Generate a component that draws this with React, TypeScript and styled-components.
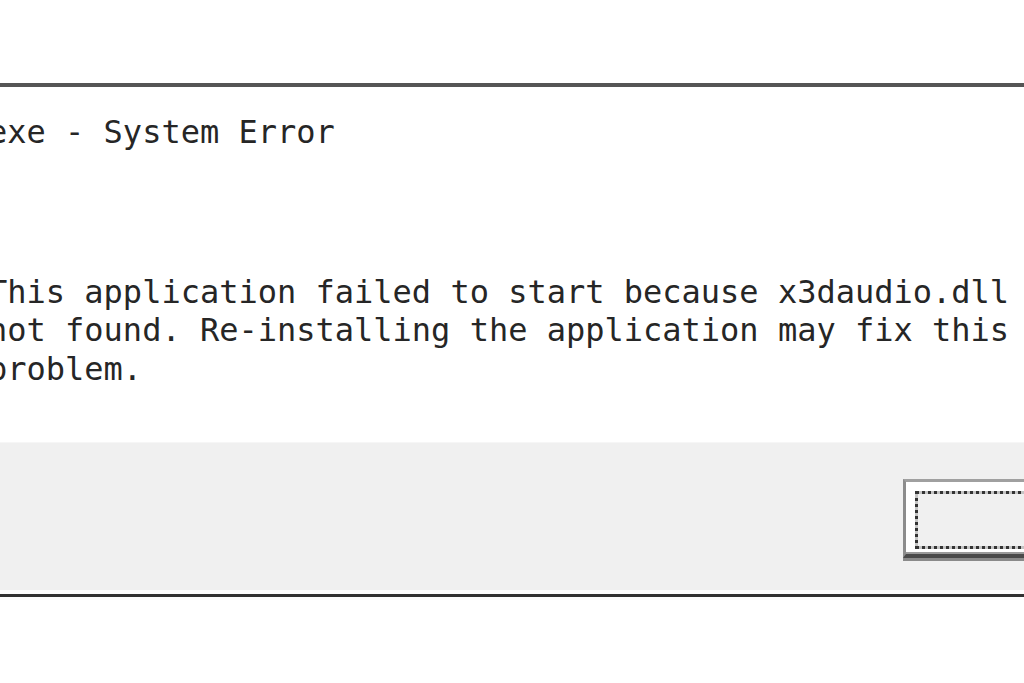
import styled, { createGlobalStyle } from "styled-components";

const GlobalStyle = createGlobalStyle`
  html,
  body {
    margin: 0;
    padding: 0;
    background: #ffffff;
    overflow: hidden;
  }

  body {
    font-family: "DejaVu Sans Mono", "Liberation Mono", monospace;
    color: #262626;
  }
`;

const Dialog = styled.div`
  box-sizing: border-box;
  width: 1273px;
  margin: 83px 0 0 -40px;
  display: flex;
  flex-flow: column;
  background: #ffffff;
  border-top: 4px solid #555555;
  border-bottom: 3px solid #333333;
  box-shadow: 0 3px 0 #6a6a6a;
  padding-bottom: 4px;
`;

const Body = styled.div`
  display: flex;
  flex-flow: column;
  padding: 26px 0 54px 28px;
`;

const Title = styled.div`
  font-size: 32px;
  line-height: 38.5px;
  white-space: pre;
`;

const Message = styled.p`
  margin: 121px 0 0 0;
  font-size: 32px;
  line-height: 38.5px;
  white-space: pre;
`;

const Footer = styled.div`
  box-sizing: border-box;
  height: 148px;
  display: flex;
  justify-content: flex-end;
  align-items: flex-start;
  padding: 36px 30px 33px 0;
  background: #f0f0f0;
  border-top: 1px solid #f6f6f6;
`;

const Button = styled.button`
  box-sizing: border-box;
  width: 300px;
  height: 79px;
  display: flex;
  padding: 9px 9px 5px 9px;
  margin: 0;
  background: #ffffff;
  border-top: 3px solid #a0a0a0;
  border-left: 3px solid #8c8c8c;
  border-right: 3px solid #4a4a4a;
  border-bottom: 4px solid #4a4a4a;
  box-shadow: 0 3px 0 #8a8a8a, inset 0 -2px 0 #9a9a9a;
  font: inherit;
  color: inherit;
  cursor: default;
`;

const FocusRing = styled.span`
  flex: 1;
  display: flex;
  align-items: center;
  justify-content: center;
  border: 3px dotted #333333;
  background:
    linear-gradient(#f0f0f0, #f0f0f0) padding-box,
    #c4c4c4 border-box;
  font-size: 32px;
  line-height: 38.5px;
`;

export default function App() {
  return (
    <>
      <GlobalStyle />
      <Dialog>
        <Body>
          <Title>exe - System Error</Title>
          <Message>
            {"This application failed to start because x3daudio.dll\n"}
            {"not found. Re-installing the application may fix this\n"}
            {"problem."}
          </Message>
        </Body>
        <Footer>
          <Button>
            <FocusRing>OK</FocusRing>
          </Button>
        </Footer>
      </Dialog>
    </>
  );
}
